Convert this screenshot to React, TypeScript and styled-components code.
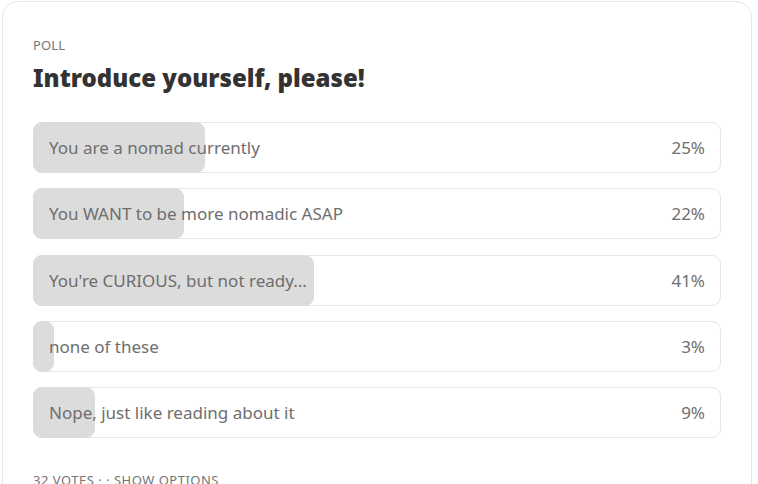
import React from "react";
import styled, { createGlobalStyle } from "styled-components";

const GlobalStyle = createGlobalStyle`
  html, body {
    margin: 0;
    padding: 0;
    background: #ffffff;
  }
  body {
    font-family: "Noto Sans", "Open Sans", sans-serif;
    overflow: hidden;
  }
`;

const options = [
  { label: "You are a nomad currently", pct: 25 },
  { label: "You WANT to be more nomadic ASAP", pct: 22 },
  { label: "You're CURIOUS, but not ready...", pct: 41 },
  { label: "none of these", pct: 3 },
  { label: "Nope, just like reading about it", pct: 9 },
];

export default function App() {
  return (
    <>
      <GlobalStyle />
      <Card>
        <Kicker>POLL</Kicker>
        <Title>Introduce yourself, please!</Title>
        <OptionList>
          {options.map((o) => (
            <Option key={o.label}>
              <Fill style={{ width: `${o.pct}%` }} />
              <Label>{o.label}</Label>
              <Percent>{o.pct}%</Percent>
            </Option>
          ))}
        </OptionList>
        <Footer>32 VOTES · · SHOW OPTIONS</Footer>
      </Card>
    </>
  );
}

const Card = styled.div`
  margin: 1px 6px 0 2px;
  border: 1px solid #e6e6e6;
  border-radius: 16px;
  padding: 35px 30px 30px 30px;
  height: 600px;
  box-sizing: border-box;
`;

const Kicker = styled.div`
  font-size: 13px;
  line-height: 17px;
  color: #757575;
  letter-spacing: 0.1px;
`;

const Title = styled.h1`
  margin: 8px 0 0 0;
  font-size: 24px;
  line-height: 32px;
  font-weight: 900;
  color: #333333;
`;

const OptionList = styled.div`
  display: flex;
  flex-direction: column;
  gap: 15px;
  margin-top: 28px;
`;

const Option = styled.div`
  position: relative;
  display: flex;
  align-items: center;
  justify-content: space-between;
  height: 51px;
  padding: 0 15px;
  border: 1px solid #e6e6e6;
  border-radius: 9px;
  box-sizing: border-box;

  & + & {
    margin-top: 0.25px;
  }
`;

const Fill = styled.div`
  position: absolute;
  left: -1px;
  top: -1px;
  bottom: -1px;
  background: #dcdcdc;
  border-radius: 9px;
`;

const Label = styled.span`
  position: relative;
  font-size: 17px;
  color: #6e6e6e;
`;

const Percent = styled.span`
  position: relative;
  font-size: 17px;
  color: #6e6e6e;
`;

const Footer = styled.div`
  margin-top: 34px;
  font-size: 13px;
  line-height: 17px;
  color: #757575;
  letter-spacing: 0.5px;
`;
